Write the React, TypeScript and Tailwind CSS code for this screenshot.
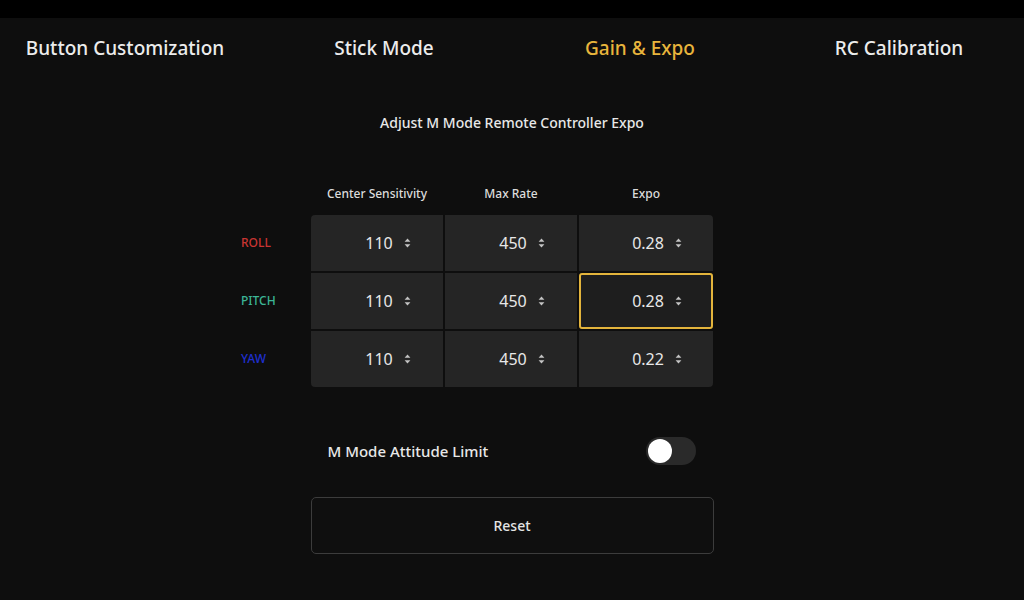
import React from "react";

const tabs = ["Button Customization", "Stick Mode", "Gain & Expo", "RC Calibration"];
const activeTab = "Gain & Expo";

const axes = [
  { name: "ROLL", color: "text-[#c93532]", values: ["110", "450", "0.28"] },
  { name: "PITCH", color: "text-[#3cb596]", values: ["110", "450", "0.28"] },
  { name: "YAW", color: "text-[#1f2fd0]", values: ["110", "450", "0.22"] },
];

const UpDown = () => (
  <svg width="7" height="11" viewBox="0 0 7 11" className="fill-[#c4c4c4]">
    <path d="M3.5 1 L6.4 4.2 H0.6 Z" />
    <path d="M3.5 10 L6.4 6.8 H0.6 Z" />
  </svg>
);

const ValueCell = ({ value, selected }: { value: string; selected?: boolean }) => (
  <div
    className={
      selected
        ? "h-[56px] bg-[#1e1e1e] flex items-center justify-center border-2 border-[#e3b43c] rounded-[3px]"
        : "h-[56px] bg-[#252525] flex items-center justify-center"
    }
  >
    <span className="relative text-[16px] text-[#e8e8e8] translate-x-[2px]">
      {value}
      <span className="absolute left-full top-1/2 -translate-y-1/2 ml-[11px] flex">
        <UpDown />
      </span>
    </span>
  </div>
);

export default function App() {
  return (
    <div
      className="w-full h-[600px] bg-[#0e0e0e] flex flex-col text-[#e8e8e8]"
      style={{ fontFamily: '"Noto Sans", "Open Sans", sans-serif' }}
    >
      <div className="h-[18px] bg-black" />

      {/* Tabs */}
      <div className="grid grid-cols-4 h-[60px] items-center">
        {tabs.map((t, i) => (
          <div
            key={t}
            className={
              (i === 0 ? "pr-[6px] " : i === 3 ? "pl-[6px] " : "") +
              (t === activeTab
                ? "text-center text-[19px] font-medium text-[#e8b53c]"
                : "text-center text-[19px] font-medium text-[#ececec]")
            }
          >
            {t}
          </div>
        ))}
      </div>

      <div className="mt-[35px] text-center text-[14px] leading-[20px] font-medium">
        Adjust M Mode Remote Controller Expo
      </div>

      {/* Table header */}
      <div className="mt-[53px] pl-[241px] flex">
        <div className="w-[70px]" />
        <div className="grid grid-cols-[132px_132px_134px] gap-x-[2px] text-[12px] leading-[16px] font-medium text-center text-[#dcdcdc]">
          <div>Center Sensitivity</div>
          <div>Max Rate</div>
          <div>Expo</div>
        </div>
      </div>

      {/* Table body */}
      <div className="mt-[13px] pl-[241px] flex">
        <div className="w-[70px] flex flex-col gap-[2px]">
          {axes.map((a) => (
            <div key={a.name} className={`h-[56px] flex items-center text-[12px] font-medium ${a.color}`}>
              {a.name}
            </div>
          ))}
        </div>
        <div className="grid grid-cols-[132px_132px_134px] gap-[2px] rounded-[4px] overflow-hidden">
          {axes.map((a, r) =>
            a.values.map((v, c) => (
              <ValueCell key={`${r}-${c}`} value={v} selected={r === 1 && c === 2} />
            ))
          )}
        </div>
      </div>

      {/* Attitude limit */}
      <div className="mt-[50px] w-[403px] mx-auto pl-[17px] pr-[18px] flex items-center justify-between">
        <span className="text-[15px] font-medium">M Mode Attitude Limit</span>
        <div className="w-[50px] h-[28px] rounded-full bg-[#2a2a2a] flex items-center px-[2px]">
          <div className="w-[24px] h-[24px] rounded-full bg-white" />
        </div>
      </div>

      <button className="mt-[32px] w-[403px] h-[57px] mx-auto border-[1.5px] border-[#3c3c3c] rounded-[5px] bg-[#0f0f0f] text-[14px] font-medium text-[#e4e4e4]">
        Reset
      </button>
    </div>
  );
}
